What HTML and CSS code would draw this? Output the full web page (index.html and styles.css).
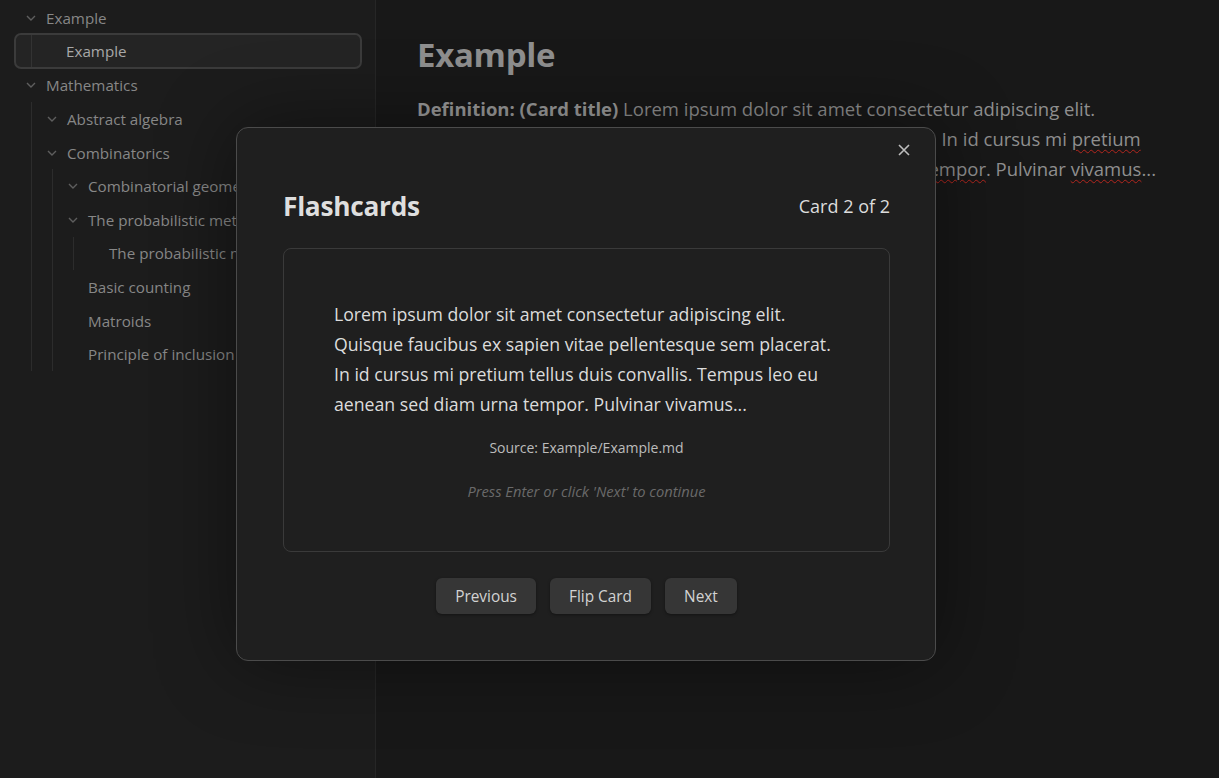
FILE: index.html
```html
<!DOCTYPE html>
<html lang="en">
<head>
<meta charset="utf-8">
<title>Flashcards</title>
<link rel="stylesheet" href="styles.css">
</head>
<body>
<div class="app">
  <aside class="sidebar">
    <div class="tree">
      <div class="row"><span class="chev"><svg viewBox="0 0 12 12"><path d="M2 4l4 4 4-4"/></svg></span><span class="label">Example</span></div>
      <div class="children">
        <div class="row selected"><span class="chev"></span><span class="label">Example</span></div>
      </div>
      <div class="row"><span class="chev"><svg viewBox="0 0 12 12"><path d="M2 4l4 4 4-4"/></svg></span><span class="label">Mathematics</span></div>
      <div class="children">
        <div class="row"><span class="chev"><svg viewBox="0 0 12 12"><path d="M2 4l4 4 4-4"/></svg></span><span class="label">Abstract algebra</span></div>
        <div class="row"><span class="chev"><svg viewBox="0 0 12 12"><path d="M2 4l4 4 4-4"/></svg></span><span class="label">Combinatorics</span></div>
        <div class="children">
          <div class="row"><span class="chev"><svg viewBox="0 0 12 12"><path d="M2 4l4 4 4-4"/></svg></span><span class="label">Combinatorial geometry</span></div>
          <div class="row"><span class="chev"><svg viewBox="0 0 12 12"><path d="M2 4l4 4 4-4"/></svg></span><span class="label">The probabilistic method</span></div>
          <div class="children">
            <div class="row"><span class="chev"></span><span class="label">The probabilistic method</span></div>
          </div>
          <div class="row"><span class="chev"></span><span class="label">Basic counting</span></div>
          <div class="row"><span class="chev"></span><span class="label">Matroids</span></div>
          <div class="row"><span class="chev"></span><span class="label">Principle of inclusion</span></div>
        </div>
      </div>
    </div>
  </aside>
  <main class="content">
    <h1 class="title">Example</h1>
    <p class="para"><strong>Definition: (Card title)</strong> Lorem ipsum dolor sit amet consectetur adipiscing elit. Quisque faucibus ex sapien vitae pellentesque sem placerat. In id cursus mi <span class="spell">pretium</span> tellus duis convallis. Tempus leo eu aenean sed diam urna <span class="spell">tempor</span>. Pulvinar <span class="spell">vivamus</span>...</p>
  </main>
</div>

<div class="modal">
  <button class="close" aria-label="Close"><svg viewBox="0 0 16 16"><path d="M3 3l10 10M13 3L3 13"/></svg></button>
  <div class="modal-head">
    <h2 class="modal-title">Flashcards</h2>
    <span class="counter">Card 2 of 2</span>
  </div>
  <div class="card">
    <p class="card-text">Lorem ipsum dolor sit amet consectetur adipiscing elit. Quisque faucibus ex sapien vitae pellentesque sem placerat. In id cursus mi pretium tellus duis convallis. Tempus leo eu aenean sed diam urna tempor. Pulvinar vivamus...</p>
    <p class="source">Source: Example/Example.md</p>
    <p class="hint">Press Enter or click 'Next' to continue</p>
  </div>
  <div class="actions">
    <button class="btn">Previous</button>
    <button class="btn">Flip Card</button>
    <button class="btn">Next</button>
  </div>
</div>
</body>
</html>
```

FILE: styles.css
```css
* { box-sizing: border-box; }
html, body { margin: 0; height: 100%; }
body {
  font-family: "Open Sans", "Noto Sans", sans-serif;
  background: #171717;
  overflow: hidden;
}
.app { display: flex; height: 100vh; }
.sidebar {
  width: 376px;
  flex: none;
  background: #1c1c1c;
  border-right: 1px solid #262626;
  padding: 1px 13px 0 0;
}
.tree { font-size: 15.2px; color: #878787; }
.row {
  display: flex;
  align-items: center;
  height: 33.6px;
  padding-left: 13px;
  white-space: nowrap;
  overflow: hidden;
}
.tree > .row { padding-left: 24px; }
.chev { width: 14px; flex: none; margin-right: 8px; display: flex; justify-content: center; }
.chev svg { width: 12px; height: 12px; fill: none; stroke: #5e5e5e; stroke-width: 1.4; }
.children { margin-left: 20px; border-left: 1px solid #2c2c2c; }
.tree > .children { margin-left: 31px; }
.row.selected {
  margin: -2px 0 0 -18px;
  padding-left: 31px;
  height: 36px;
  border: 2px solid #3b3b3b;
  border-radius: 7px;
  background: rgba(255,255,255,0.035);
  color: #a8a8a8;
}
.row.selected .chev { display: none; }
.row.selected .label { margin-left: 19px; }

.content { flex: 1; padding: 32px 40px 0 41px; background: #181818; }
.title {
  margin: 0 0 16px;
  font-size: 33px;
  font-weight: 700;
  color: #8f8f8f;
  line-height: 46px;
  letter-spacing: -0.3px;
}
.para {
  margin: 0;
  max-width: 748px;
  font-size: 18.5px;
  line-height: 30px;
  color: #8f8f8f;
}
.para strong { color: #9b9b9b; }
.spell { text-decoration: underline wavy #b3261e; text-decoration-thickness: 1px; text-underline-offset: 3px; }

.modal {
  position: absolute;
  left: 236px;
  top: 127px;
  width: 700px;
  height: 534px;
  background: #1f1f1f;
  border: 1px solid #4b4b4b;
  border-radius: 12px;
  padding: 56px 45px 45px 46px;
  box-shadow: 0 0 80px rgba(0,0,0,0.45);
  color: #dadada;
}
.close {
  position: absolute;
  top: 10px;
  right: 19px;
  width: 24px;
  height: 24px;
  padding: 4px;
  border: 0;
  background: none;
}
.close svg { width: 16px; height: 16px; fill: none; stroke: #bdbdbd; stroke-width: 1.6; display: block; }
.modal-head {
  display: flex;
  justify-content: space-between;
  align-items: center;
  height: 44px;
  margin-bottom: 20px;
}
.modal-title { margin: 0; font-size: 26.3px; font-weight: 700; color: #dedede; letter-spacing: -0.3px; }
.counter { font-size: 18px; color: #dcdcdc; }
.card {
  border: 1px solid #3a3a3a;
  border-radius: 8px;
  padding: 50px;
  height: 304px;
}
.card-text { margin: 0; font-size: 17.7px; line-height: 30px; color: #dcdcdc; }
.source { margin: 18px 0 0; text-align: center; font-size: 14px; line-height: 22px; color: #bcbcbc; }
.hint { margin: 22px 0 0; text-align: center; font-size: 14.7px; line-height: 20px; font-style: italic; color: #6a6a6a; }
.actions { display: flex; justify-content: center; gap: 14px; margin-top: 26px; }
.btn {
  height: 36px;
  padding: 0 19px;
  font-family: inherit;
  font-size: 15.4px;
  color: #d2d2d2;
  background: #363636;
  border: 0;
  border-radius: 6px;
  box-shadow: 0 1px 3px rgba(0,0,0,0.4);
}
```
